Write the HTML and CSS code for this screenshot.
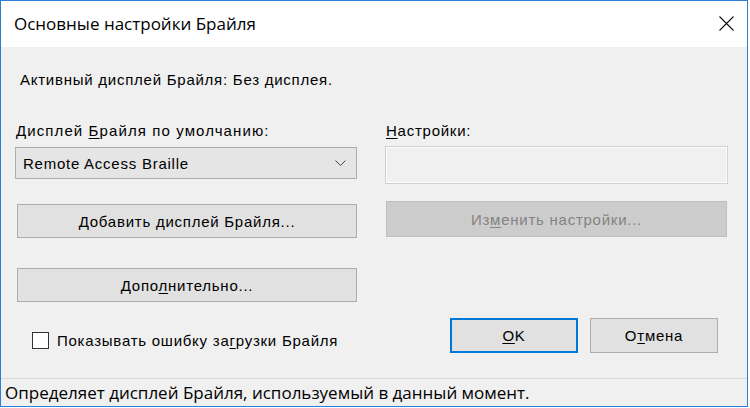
FILE: index.html
```html
<!DOCTYPE html>
<html lang="ru">
<head>
<meta charset="utf-8">
<title>Основные настройки Брайля</title>
<link rel="stylesheet" href="styles.css">
</head>
<body>
<div class="window">
  <div class="titlebar">
    <span class="title">Основные настройки Брайля</span>
    <span class="close" aria-label="Закрыть">
      <svg width="15" height="15" viewBox="0 0 15 15"><path d="M0.5 0.5 L14.5 14.5 M14.5 0.5 L0.5 14.5" stroke="#111" stroke-width="1.1" fill="none"/></svg>
    </span>
  </div>
  <div class="content">
    <div class="active">Активный дисплей Брайля: Без дисплея.</div>
    <div class="columns">
      <div class="col col-left">
        <div class="label">Дисплей <u>Б</u>райля по умолчанию:</div>
        <div class="combo">
          <span>Remote Access Braille</span>
          <svg class="chev" width="11" height="6" viewBox="0 0 11 6"><path d="M0.5 0.5 L5.5 5.5 L10.5 0.5" stroke="#444" stroke-width="1" fill="none"/></svg>
        </div>
        <div class="btn btn-add"><span><u>Д</u>обавить дисплей Брайля...</span></div>
        <div class="btn btn-more"><span>Допо<u>л</u>нительно...</span></div>
        <div class="check-row">
          <span class="checkbox"></span>
          <span class="check-label">Показывать ошибку за<u>г</u>рузки Брайля</span>
        </div>
      </div>
      <div class="col col-right">
        <div class="label"><u>Н</u>астройки:</div>
        <div class="field"></div>
        <div class="btn btn-disabled"><span>Из<u>м</u>енить настройки...</span></div>
        <div class="dlg-buttons">
          <div class="btn btn-ok"><span><u>О</u>K</span></div>
          <div class="btn btn-cancel"><span>О<u>т</u>мена</span></div>
        </div>
      </div>
    </div>
  </div>
  <div class="statusbar">Определяет дисплей Брайля, используемый в данный момент.</div>
</div>
</body>
</html>
```

FILE: styles.css
```css
html, body {
  margin: 0;
  padding: 0;
  background: #ffffff;
}

body {
  width: 750px;
  height: 408px;
  overflow: hidden;
}

.window {
  width: 748px;
  height: 407px;
  box-sizing: border-box;
  border: 1px solid #2b7fd2;
  display: flex;
  flex-direction: column;
  background: #f0f0f0;
  font-family: "Liberation Sans", Arial, sans-serif;
  font-size: 15px;
  letter-spacing: 0.75px;
  color: #000;
}

.titlebar {
  height: 46px;
  background: #ffffff;
  display: flex;
  align-items: center;
  justify-content: space-between;
  padding: 0 0 0 13px;
  flex-shrink: 0;
}

.title {
  font-family: "Open Sans", "Noto Sans", sans-serif;
  font-size: 17px;
  letter-spacing: 0;
  color: #000;
  margin-top: -1px;
}

.close {
  width: 46px;
  height: 46px;
  display: flex;
  align-items: center;
  justify-content: center;
  margin-right: -2px;
  margin-top: -1px;
}

.content {
  flex: 1;
  padding: 0 0 0 14px;
}

.active {
  margin-top: 24px;
  margin-left: 5px;
  height: 17px;
  line-height: 17px;
}

.columns {
  display: flex;
  gap: 28px;
  margin-top: 34px;
}

.col {
  width: 342px;
  display: flex;
  flex-direction: column;
}

.label {
  height: 17px;
  line-height: 17px;
  margin-left: 1px;
}

.col-left .label {
  letter-spacing: 1.1px;
}

.combo {
  margin-top: 8px;
  height: 32px;
  box-sizing: border-box;
  border: 1px solid #adadad;
  background: #e5e5e5;
  display: flex;
  align-items: center;
  justify-content: space-between;
  padding: 0 10px 0 7px;
}

.btn {
  box-sizing: border-box;
  border: 1px solid #adadad;
  background: #e1e1e1;
  display: flex;
  align-items: center;
  justify-content: center;
}

.btn-add {
  margin: 25px 0 0 2px;
  height: 34px;
  width: 340px;
}

.btn-more {
  margin: 30px 0 0 2px;
  height: 34px;
  width: 340px;
}

.check-row {
  margin: 30px 0 0 17px;
  height: 17px;
  display: flex;
  align-items: center;
}

.checkbox {
  width: 17px;
  height: 17px;
  box-sizing: border-box;
  border: 1px solid #333333;
  background: #ffffff;
  flex-shrink: 0;
}

.check-label {
  margin-left: 8px;
}

.field {
  margin-top: 7px;
  height: 38px;
  width: 343px;
  box-sizing: border-box;
  border: 1px solid #d0d0d0;
  box-shadow: inset 0 0 0 1px #ffffff;
  background: #f0f0f0;
}

.btn-disabled {
  margin: 17px 0 0 1px;
  height: 36px;
  width: 341px;
  background: #cccccc;
  border-color: #bfbfbf;
  color: #838383;
}

.dlg-buttons {
  margin: 81px 0 0 65px;
  display: flex;
  gap: 12px;
}

.btn-ok,
.btn-cancel {
  width: 128px;
  height: 35px;
}

.btn-ok {
  border: 2px solid #0078d7;
}

.statusbar {
  height: 28px;
  box-sizing: border-box;
  border-top: 1px solid #d9d9d9;
  font-family: "Open Sans", "Noto Sans", sans-serif;
  font-size: 17px;
  letter-spacing: 0;
  line-height: 27px;
  padding-left: 4px;
  flex-shrink: 0;
  background: #f0f0f0;
}

u {
  text-decoration: underline;
  text-underline-offset: 2px;
}
```
